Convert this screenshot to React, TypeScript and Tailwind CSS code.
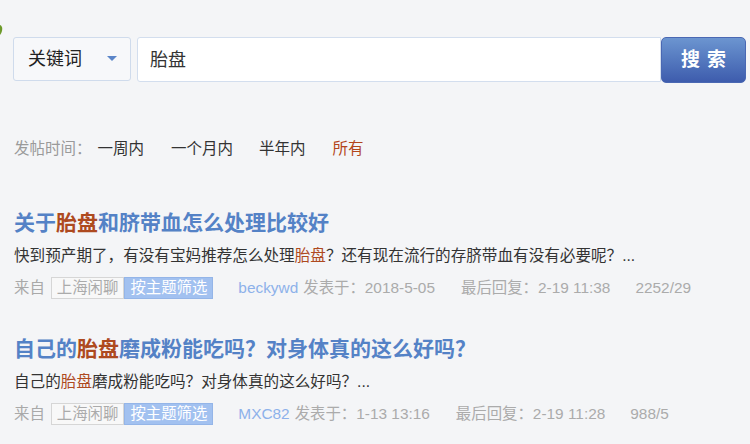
import React from "react";

const FONT = { fontFamily: '"Liberation Sans", "Noto Sans CJK SC", sans-serif' };

type Item = {
  pre: string;
  post: string;
  descPre: string;
  descPost: string;
  user: string;
  posted: string;
  reply: string;
  stats: string;
};

const items: Item[] = [
  {
    pre: "关于",
    post: "和脐带血怎么处理比较好",
    descPre: "快到预产期了，有没有宝妈推荐怎么处理",
    descPost: "？还有现在流行的存脐带血有没有必要呢？...",
    user: "beckywd",
    posted: "2018-5-05",
    reply: "2-19 11:38",
    stats: "2252/29",
  },
  {
    pre: "自己的",
    post: "磨成粉能吃吗？对身体真的这么好吗？",
    descPre: "自己的",
    descPost: "磨成粉能吃吗？对身体真的这么好吗？...",
    user: "MXC82",
    posted: "1-13 13:16",
    reply: "2-19 11:28",
    stats: "988/5",
  },
];

function Result({ it, first }: { it: Item; first: boolean }) {
  return (
    <div className={first ? "mt-[49px]" : "mt-[36px]"}>
      <div className="h-[28px] leading-[28px] text-[21px] font-bold text-[#5482c6] whitespace-nowrap">
        {it.pre}
        <span className="text-[#ae4a1f]">胎盘</span>
        {it.post}
      </div>
      <div className="mt-[8px] h-[22px] leading-[22px] text-[15.6px] text-[#333333] whitespace-nowrap">
        {it.descPre}
        <span className="text-[#ae4a1f]">胎盘</span>
        {it.descPost}
      </div>
      <div className="mt-[10px] flex items-center h-[22px] text-[15.4px] whitespace-nowrap">
        <span className="text-[#a9a9a9]">来自</span>
        <span className="ml-[6px] h-[22px] leading-[20px] px-[5px] border border-[#d6d6d6] bg-[#f8f8f8] text-[#ababab]">
          上海闲聊
        </span>
        <span className="h-[22px] leading-[20px] px-[5px] border border-[#94b5e8] bg-[#a2c1f0] text-white">
          按主题筛选
        </span>
        <span className="ml-[25px] text-[#8db1ea]">{it.user}</span>
        <span className="ml-[5px] text-[#ababab]">发表于：{it.posted}</span>
        <span className="ml-[26px] text-[#ababab]">最后回复：{it.reply}</span>
        <span className="ml-[25px] text-[#ababab]">{it.stats}</span>
      </div>
    </div>
  );
}

export default function App() {
  return (
    <div
      className="relative w-[750px] h-[444px] overflow-hidden bg-[#f4f5f7] pl-[13px]"
      style={FONT}
    >
      <svg className="absolute left-0 top-[24px]" width="4" height="12" viewBox="0 0 4 12">
        <path d="M0 1 C3 2 3 7 0 11 Z" fill="#6d9a2a" />
      </svg>

      <div className="pt-[37px] flex items-start">
        <div className="w-[118px] h-[44px] rounded-[3px] border border-[#cfdbec] bg-[#f7f8fa] flex items-center justify-between pl-[14px] pr-[13px]">
          <span className="text-[18px] text-[#222222] leading-[24px]">关键词</span>
          <svg width="10" height="6" viewBox="0 0 10 6">
            <path d="M0 0 H10 L5 5 Z" fill="#5b85c8" />
          </svg>
        </div>
        <div className="ml-[6px] w-[524px] h-[45px] rounded-l-[3px] border border-[#d3deee] bg-white flex items-center pl-[12px]">
          <span className="text-[18px] text-[#333333] leading-[24px]">胎盘</span>
        </div>
        <div className="w-[85px] h-[46px] rounded-[5px] bg-gradient-to-b from-[#6c95d0] to-[#3e5cad] border border-[#4a68b3] flex items-center justify-center">
          <span className="text-[19px] font-bold text-white tracking-[7px] pl-[7px] leading-[24px]">搜索</span>
        </div>
      </div>

      <div className="mt-[55px] flex items-center h-[22px] text-[15.5px] whitespace-nowrap pl-[1px]">
        <span className="text-[#9a9a9a]">发帖时间：</span>
        <span className="ml-[6px] text-[#333333]">一周内</span>
        <span className="ml-[27px] text-[#333333]">一个月内</span>
        <span className="ml-[26px] text-[#333333]">半年内</span>
        <span className="ml-[27px] text-[#b3461b]">所有</span>
      </div>

      <div className="pl-[1px]">
        {items.map((it, i) => (
          <Result key={i} it={it} first={i === 0} />
        ))}
      </div>
    </div>
  );
}
